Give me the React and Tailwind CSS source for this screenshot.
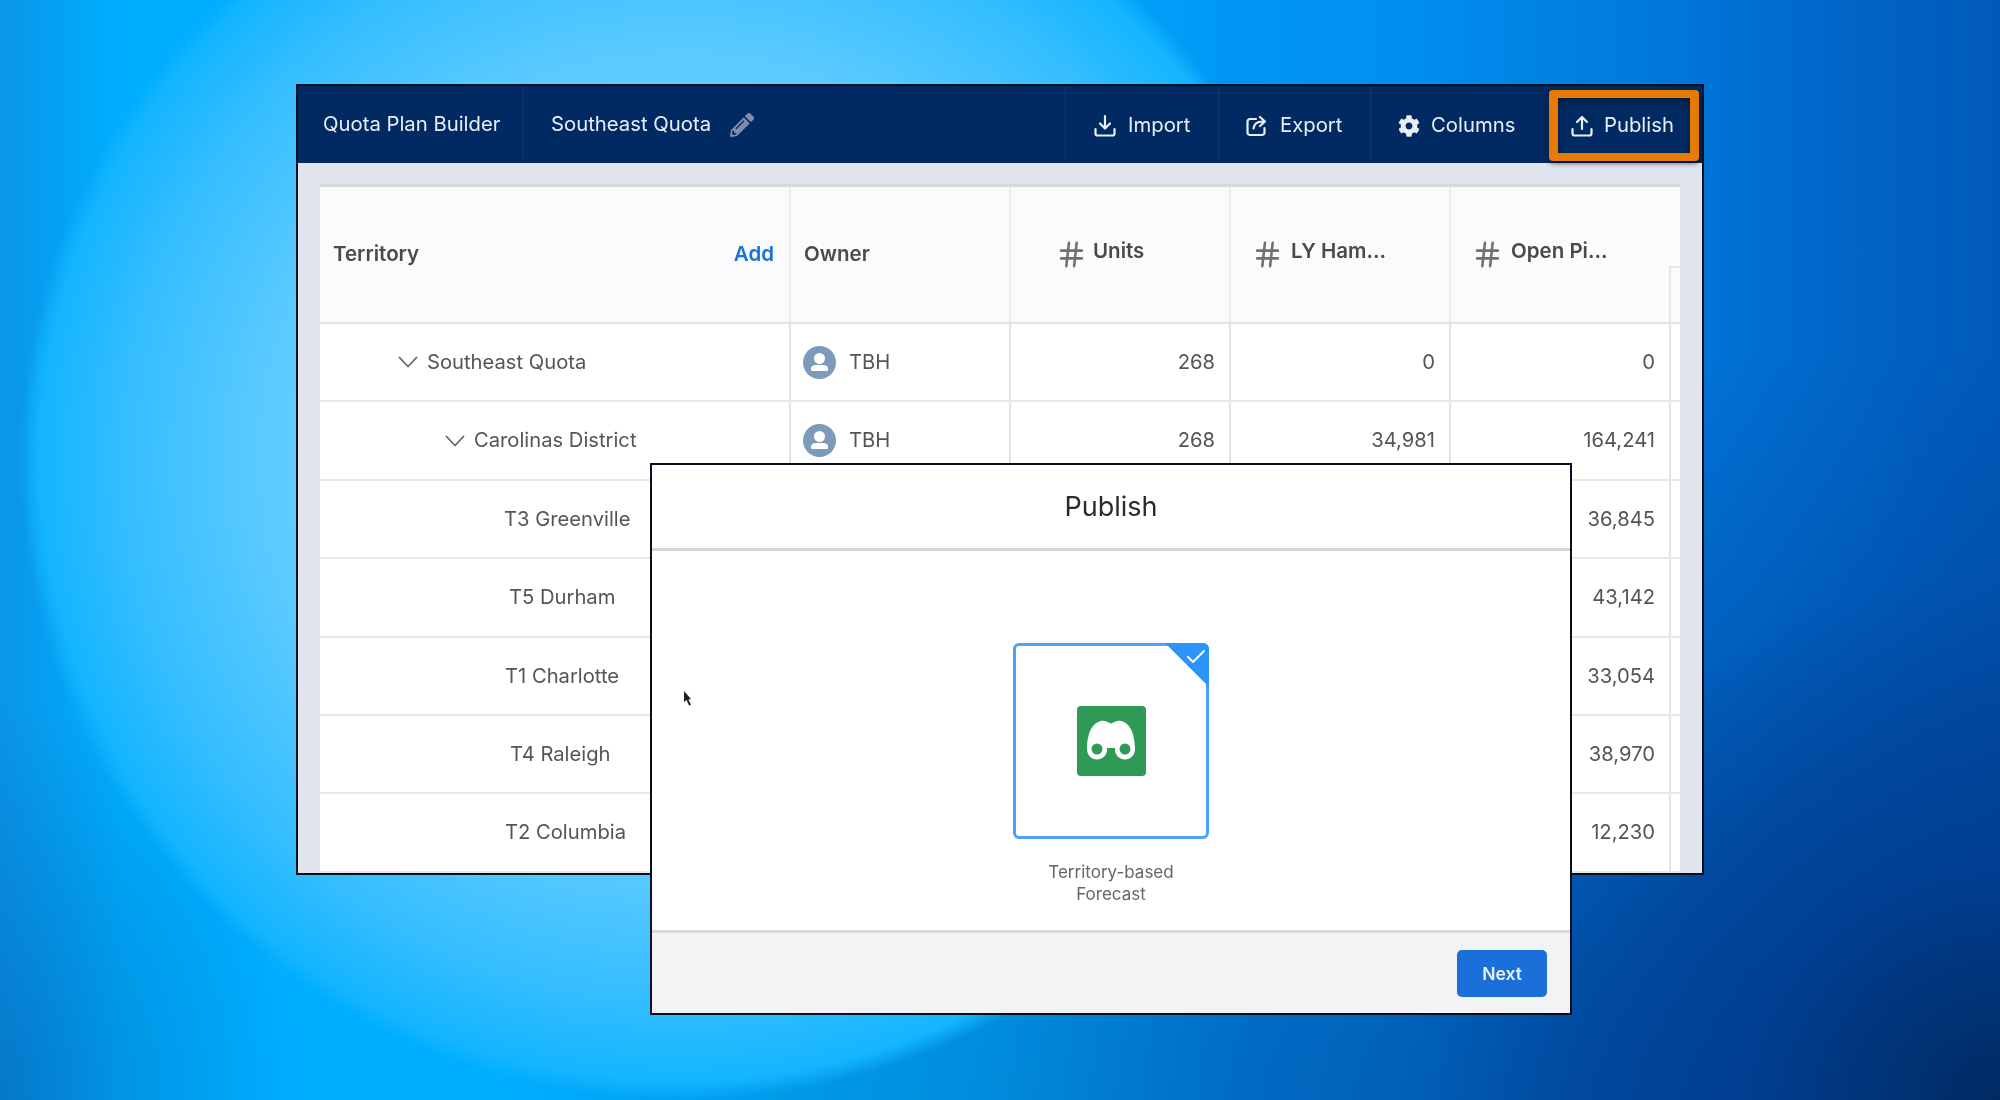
import React from "react";
import { Hash, Check } from "lucide-react";
import { FaCog, FaPencilAlt } from "react-icons/fa";

const font = "font-['Inter','Liberation_Sans',sans-serif]";

const Download = () => (
  <svg width="24" height="24" viewBox="0 0 24 24" fill="none" stroke="currentColor" strokeWidth="2.200" strokeLinecap="round" strokeLinejoin="round">
    <path d="M12 2v12M7 9.500l5 5 5-5" />
    <path d="M2.500 15v4.500a2 2 0 0 0 2 2h15a2 2 0 0 0 2-2V15" />
  </svg>
);
const Upload = () => (
  <svg width="24" height="24" viewBox="0 0 24 24" fill="none" stroke="currentColor" strokeWidth="2.200" strokeLinecap="round" strokeLinejoin="round">
    <path d="M12 15V3M7 8l5-5 5 5" />
    <path d="M2.500 15v4.500a2 2 0 0 0 2 2h15a2 2 0 0 0 2-2V15" />
  </svg>
);
const Share = () => (
  <svg width="24" height="24" viewBox="0 0 24 24" fill="none" stroke="currentColor" strokeWidth="2.200" strokeLinecap="round" strokeLinejoin="round">
    <path d="M11 5H5a2.500 2.500 0 0 0-2.500 2.500v11A2.500 2.500 0 0 0 5 21h12a2.500 2.500 0 0 0 2.500-2.500V14" />
    <path d="M8.500 14.500c.5-4 3.500-7 9-7M15 3l5 4.500-5 4.500" />
  </svg>
);
const Chevron = () => (
  <svg width="20" height="12" viewBox="0 0 20 12" fill="none" stroke="#666" strokeWidth="1.800" strokeLinecap="round" strokeLinejoin="round">
    <path d="M1.500 1.500L10 10.500l8.500-9" />
  </svg>
);
const Avatar = () => (
  <svg width="33" height="33" viewBox="0 0 33 33">
    <circle cx="16.500" cy="16.500" r="16.500" fill="#7c9bbb" />
    <circle cx="16.500" cy="12.500" r="5.500" fill="#fff" />
    <path d="M8 22.500c0-2 2-3.500 4.500-3.500h8c2.500 0 4.500 1.500 4.500 3.500V24a1 1 0 0 1-1 1H9a1 1 0 0 1-1-1z" fill="#fff" />
  </svg>
);
const Binoculars = () => (
  <svg width="69" height="70" viewBox="0 0 69 70">
    <rect width="69" height="70" rx="4" fill="#2f9a56" />
    <path d="M10 43C10 30 14 17 24 15c4-.8 7 1.500 10 2.500 3-1 6-3.300 10-2.500 10 2 14 15 14 28 0 6-4.500 10.500-10 10.500S38 49 38 44v-2h-8v2c0 5-4.500 9.500-10 9.500S10 49 10 43z" fill="#fff" />
    <circle cx="20" cy="43" r="5.500" fill="#2f9a56" />
    <circle cx="48" cy="43" r="5.500" fill="#2f9a56" />
  </svg>
);
const Cursor = () => (
  <svg width="10" height="16" viewBox="0 0 10 16">
    <path d="M1 1l7 8-2.500.5L8 15l-2 .5-2.500-5.500L1 12z" fill="#222" />
  </svg>
);

const NavBtn = ({ icon, label, w, pad, gap }) => (
  <div className={`${w} ${pad} ${gap} h-full flex items-center border-l border-[#123466] text-[#e9eef5] text-[20.300px] pt-[2px]`}>
    {icon}
    <span>{label}</span>
  </div>
);

const HeadNum = ({ label, pl, gap }) => (
  <div className={`${pl} ${gap} flex items-center border-l-2 border-[#ececf0] pb-[5px] text-[#4a4a4a] font-semibold text-[20.500px]`}>
    <Hash size={31} strokeWidth={2} className="text-[#707070] mt-[5px]" />
    <span className="-mt-[2px]">{label}</span>
  </div>
);

const rows = [
  { name: "Southeast Quota", pl: "pl-[78px]", tree: true, owner: true, units: "268", ly: "0", open: "0" },
  { name: "Carolinas District", pl: "pl-[125px]", tree: true, owner: true, units: "268", ly: "34,981", open: "164,241" },
  { name: "T3 Greenville", pl: "pl-[184px]", open: "36,845" },
  { name: "T5 Durham", pl: "pl-[189px]", open: "43,142" },
  { name: "T1 Charlotte", pl: "pl-[185px]", open: "33,054" },
  { name: "T4 Raleigh", pl: "pl-[190px]", open: "38,970" },
  { name: "T2 Columbia", pl: "pl-[185px]", open: "12,230" },
];

const Num = ({ v }) => (
  <div className="flex items-center justify-end pr-[14px] border-l-2 border-[#e4e4e8]">{v}</div>
);

export default function App() {
  return (
    <div
      className={`${font} relative w-[2000px] h-[1100px] overflow-hidden pt-[84px] pl-[296px] [background:radial-gradient(ellipse_660px_640px_at_680px_460px,#8ad8ff_0%,#7dd4ff_35%,#58c9ff_65%,#33bdff_85%,#14b5ff_97%,rgba(0,180,255,0)_100%),radial-gradient(ellipse_560px_520px_at_2000px_1100px,#002a62_0%,rgba(0,60,140,0.7)_45%,rgba(0,80,180,0)_100%),radial-gradient(ellipse_1300px_800px_at_1800px_1150px,rgba(0,50,130,0.75)_0%,rgba(0,60,150,0)_100%),radial-gradient(ellipse_300px_400px_at_0px_1100px,rgba(0,90,170,0.5)_0%,rgba(0,90,170,0)_100%),linear-gradient(to_right,#0a95e8_0%,#00aeff_6%,#00aeff_50%,#0096f4_62%,#0090f0_70%,#0078dc_83%,#005fc0_96%,#005ab8_100%)]`}
    >
      <div className="relative w-[1408px] h-[791px] border-2 border-[#0a0f1e] bg-[#e0e4ec] overflow-hidden flex flex-col blur-[0.5px]">
        <div className="h-[77px] shrink-0 bg-[#012a62] flex items-center">
          <div className="w-[226px] h-full pl-[25px] flex items-center border-r border-[#123466] text-[#e9eef5] text-[20.300px]">
            Quota Plan Builder
          </div>
          <div className="pl-[27px] flex items-center gap-[19px] text-[#e9eef5] text-[20.300px]">
            <span>Southeast Quota</span>
            <FaPencilAlt size={24} className="text-[#7f8ea8]" />
          </div>
          <div className="ml-auto h-full flex">
            <NavBtn icon={<Download />} label="Import" w="w-[153px]" pad="pl-[27px]" gap="gap-[11px]" />
            <NavBtn icon={<Share />} label="Export" w="w-[152px]" pad="pl-[26px]" gap="gap-[11px]" />
            <NavBtn icon={<FaCog size={22} />} label="Columns" w="w-[179px]" pad="pl-[27px]" gap="gap-[11px]" />
            <NavBtn icon={<Upload />} label="Publish" w="w-[153px]" pad="pl-[20px]" gap="gap-[10px]" />
          </div>
        </div>

        <div className="flex-1 pt-[21px] pl-[22px] pr-[22px] overflow-hidden">
          <div className="w-[1360px] bg-white border-t-[3px] border-[#d6d8de] rounded-t-[3px] text-[#555] text-[20.200px]">
            <div className="h-[137px] bg-[#fbfbfe] border-b-2 border-[#e4e4e8] grid grid-cols-[469px_220px_220px_220px_220px_11px]">
              <div className="flex items-center justify-between pl-[13px] pr-[15px] font-semibold text-[20.500px] text-[#4a4a4a]">
                <span>Territory</span>
                <span className="text-[#1b72d8]">Add</span>
              </div>
              <div className="flex items-center pl-[13px] font-semibold text-[20.500px] text-[#4a4a4a] border-l-2 border-[#ececf0]">
                Owner
              </div>
              <HeadNum label="Units" pl="pl-[45px]" gap="gap-[6px]" />
              <HeadNum label="LY Ham..." pl="pl-[21px]" gap="gap-[8px]" />
              <HeadNum label="Open Pi..." pl="pl-[21px]" gap="gap-[8px]" />
              <div className="mt-[79px] border-l-2 border-t-2 border-[#e8e8ec]" />
            </div>
            {rows.map((r) => (
              <div
                key={r.name}
                className="h-[78.400px] border-b-2 border-[#e8e8ec] grid grid-cols-[469px_220px_220px_220px_220px_11px]"
              >
                <div className={`${r.pl} ${r.tree ? "gap-[9px]" : ""} flex items-center`}>
                  {r.tree && <Chevron />}
                  <span>{r.name}</span>
                </div>
                <div className="flex items-center gap-[13px] pl-[12px] border-l-2 border-[#e4e4e8]">
                  {r.owner && <Avatar />}
                  {r.owner && <span>TBH</span>}
                </div>
                <Num v={r.units} />
                <Num v={r.ly} />
                <Num v={r.open} />
                <div className="border-l-2 border-[#e4e4e8]" />
              </div>
            ))}
          </div>
        </div>

        <div className="absolute top-[4px] right-[3px] w-[150px] h-[71px] border-y-[8px] border-x-[9px] border-[#e67b04] rounded-[4px] shadow-[0_2px_5px_rgba(0,0,0,0.65),inset_0_4px_6px_rgba(0,0,0,0.35)]" />
      </div>

      <div className="absolute left-[650px] top-[463px] w-[922px] h-[552px] border-2 border-[#0a0f1e] bg-white flex flex-col blur-[0.4px]">
        <div className="h-[86px] shrink-0 border-b-[3px] border-[#d5d5d8] pt-[2px] flex items-center justify-center text-[27px] text-[#2a2a2a]">
          Publish
        </div>
        <div className="flex-1 flex flex-col items-center pt-[92px]">
          <div className="relative w-[196px] h-[196px] border-[3px] border-[#4ea2f6] rounded-[6px] flex items-center justify-center">
            <Binoculars />
            <div className="absolute -top-[3px] -right-[3px] w-[44px] h-[44px] bg-[#2b93fa] rounded-tr-[6px] [clip-path:polygon(0_0,100%_0,100%_100%)]" />
            <Check size={24} strokeWidth={2} className="absolute -top-[1px] -right-[2px] text-white" />
          </div>
          <div className="mt-[23px] text-center text-[17px] leading-[21.500px] text-[#666]">
            Territory-based
            <br />
            Forecast
          </div>
        </div>
        <div className="h-[83px] shrink-0 border-t-[3px] border-[#d8d8da] bg-[#f3f2f5] flex items-center justify-end pr-[23px]">
          <div className="w-[90px] h-[47px] rounded-[5px] bg-[#1b6fd9] pt-[2px] text-white/90 font-semibold text-[17.500px] flex items-center justify-center">
            Next
          </div>
        </div>
        <div className="absolute left-[31px] top-[225px]">
          <Cursor />
        </div>
      </div>
    </div>
  );
}
